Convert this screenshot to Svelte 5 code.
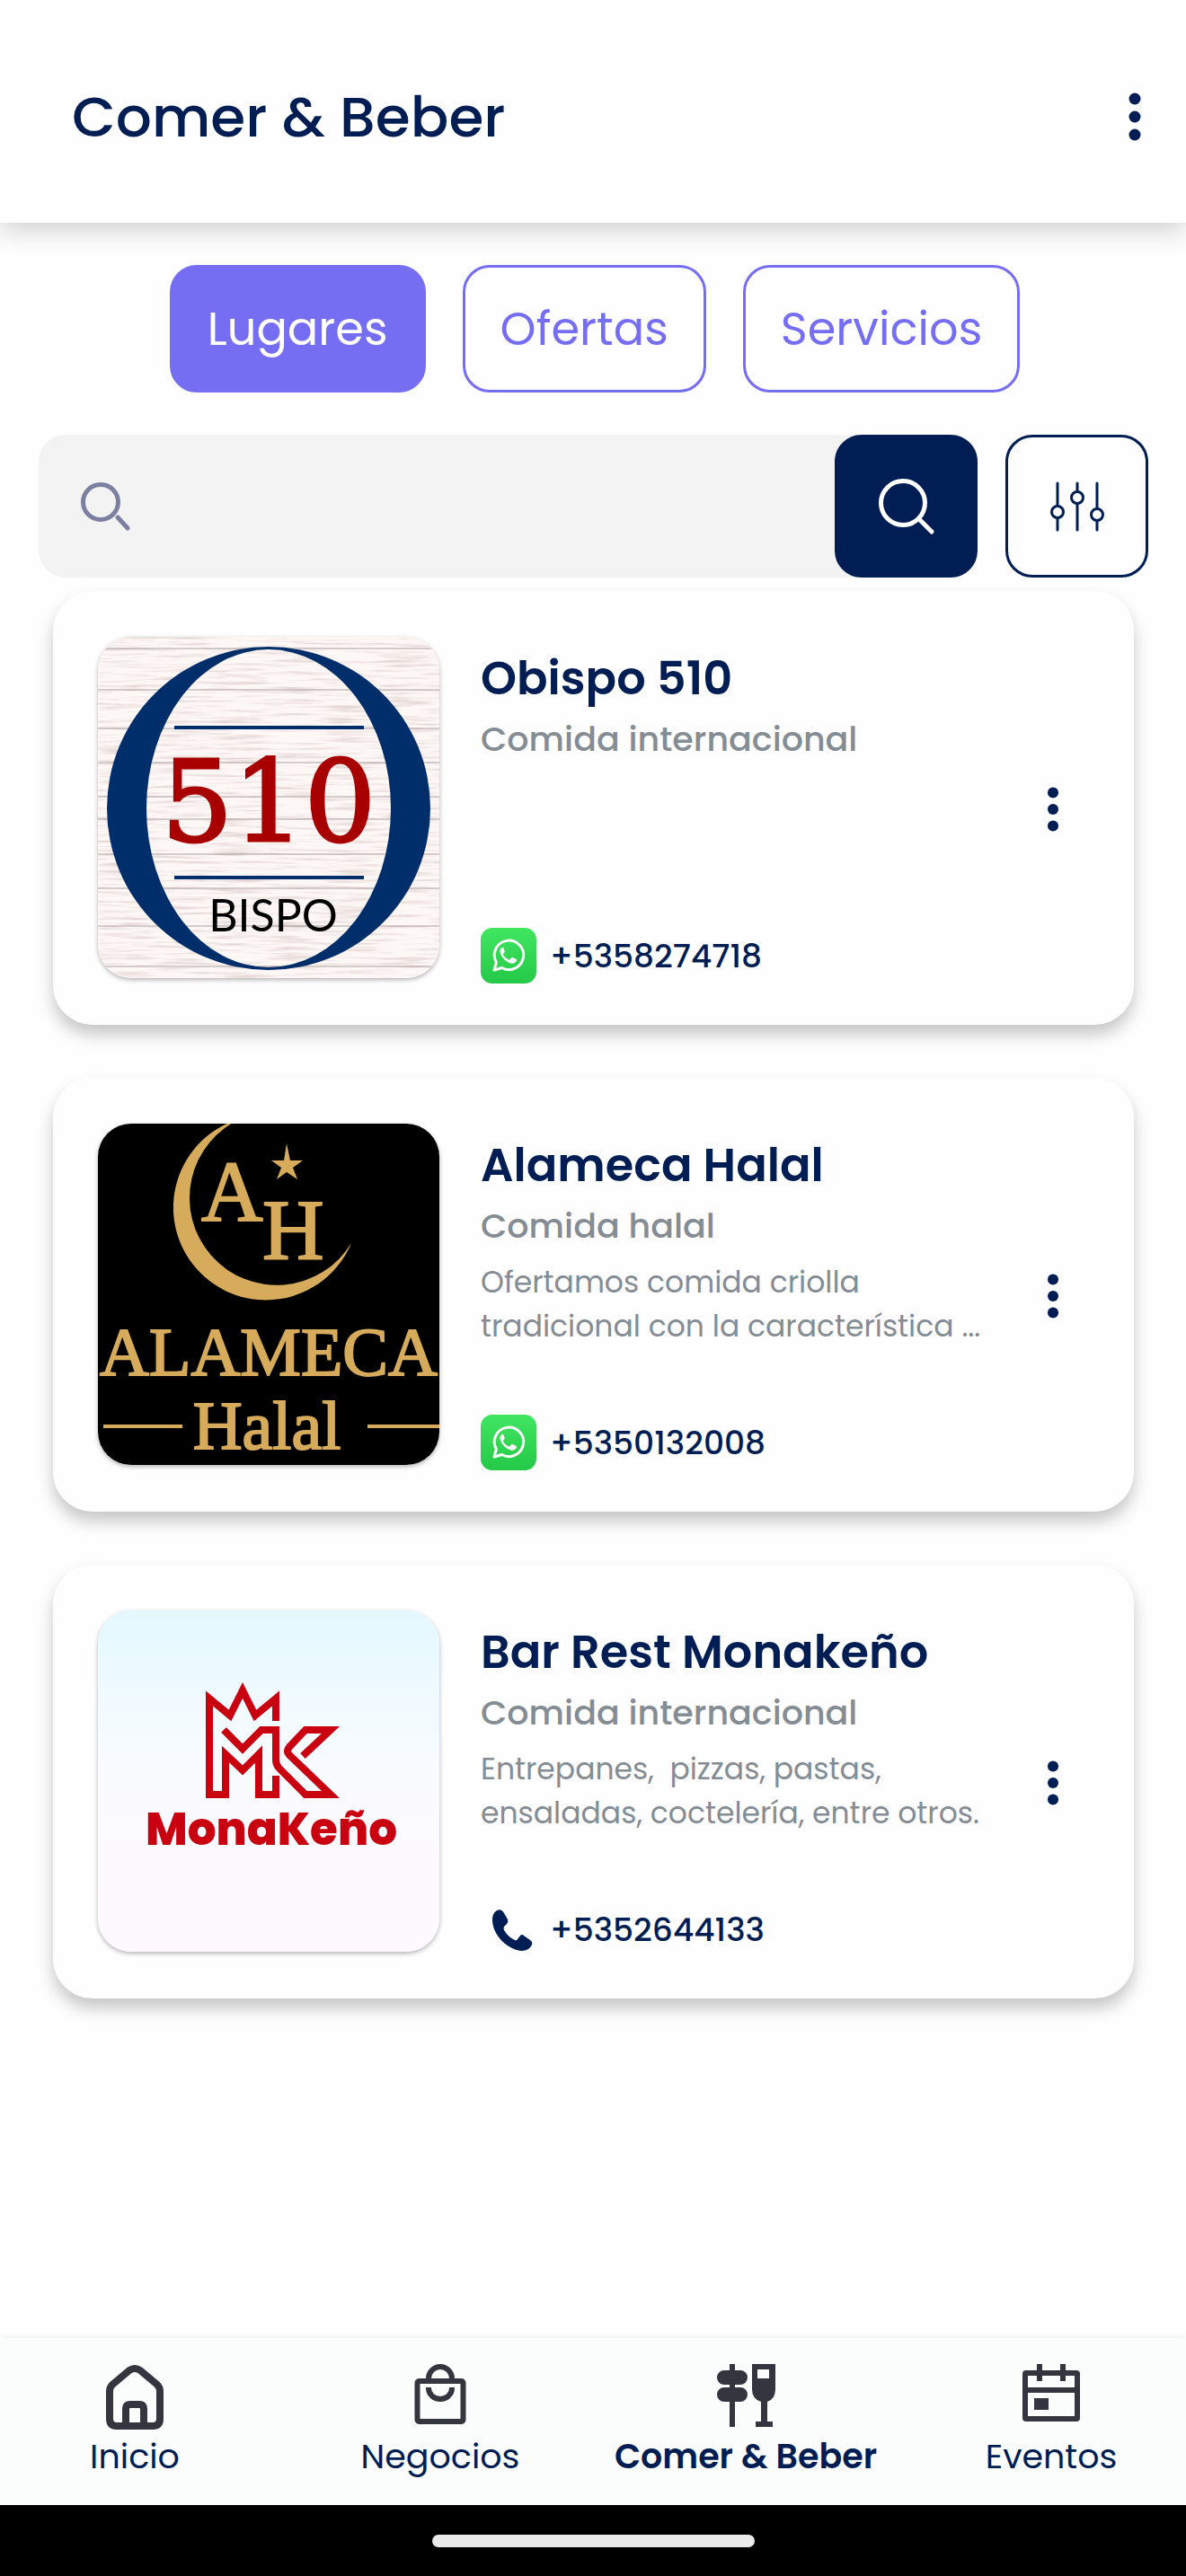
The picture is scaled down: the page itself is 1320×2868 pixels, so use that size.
<script>
  const tabs = ['Lugares', 'Ofertas', 'Servicios'];
  let activeTab = $state('Lugares');
  let query = $state('');

  const places = [
    {
      name: 'Obispo 510',
      category: 'Comida internacional',
      description: '',
      phone: '+5358274718',
      whatsapp: true,
      logo: 'obispo'
    },
    {
      name: 'Alameca Halal',
      category: 'Comida halal',
      description: 'Ofertamos comida criolla tradicional con la característica ...',
      phone: '+5350132008',
      whatsapp: true,
      logo: 'alameca'
    },
    {
      name: 'Bar Rest Monakeño',
      category: 'Comida internacional',
      description: 'Entrepanes,\u00a0 pizzas, pastas, ensaladas, coctelería, entre otros.',
      phone: '+5352644133',
      whatsapp: false,
      logo: 'monakeno'
    }
  ];

  const navItems = [
    { label: 'Inicio', icon: 'home' },
    { label: 'Negocios', icon: 'bag' },
    { label: 'Comer & Beber', icon: 'food' },
    { label: 'Eventos', icon: 'calendar' }
  ];
  let activeNav = $state('Comer & Beber');
</script>

{#snippet dots()}
  <svg class="dots" viewBox="0 0 14 54" aria-hidden="true">
    <circle cx="7" cy="7" r="6.5" />
    <circle cx="7" cy="27" r="6.5" />
    <circle cx="7" cy="47" r="6.5" />
  </svg>
{/snippet}

{#snippet logo(name)}
  {#if name === 'obispo'}
    <svg class="logo" viewBox="0 0 380 380" role="img" aria-label="Obispo 510">
      <filter id="grain" x="0" y="0" width="100%" height="100%">
        <feTurbulence type="fractalNoise" baseFrequency="0.016 0.3" numOctaves="4" seed="8" />
        <feColorMatrix values="0 0 0 0 0.6  0 0 0 0 0.48  0 0 0 0 0.46  1.3 0.5 0 0 -0.86" />
      </filter>
      <rect width="380" height="380" fill="#fdf7f5" />
      <rect width="380" height="380" filter="url(#grain)" />
      <path
        d="M0 13h380M0 59h380M0 102h380M0 140h380M0 178h380M0 203h380M0 242h380M0 280h380M0 322h380M0 367h380"
        stroke="#5d4c4c"
        stroke-opacity="0.5"
      />
      <path
        fill="#002e6a"
        fill-rule="evenodd"
        d="M190 11a180 180 0 1 1 0 360a180 180 0 1 1 0-360zM190 14a136 177 0 1 0 0 354a136 177 0 1 0 0-354z"
      />
      <path d="M85 101h211M85 268h211" stroke="#002e6a" stroke-width="4" />
      <text class="logo-number" x="190" y="227">510</text>
      <text class="logo-bispo" x="195" y="328">BISPO</text>
    </svg>
  {:else if name === 'alameca'}
    <svg class="logo" viewBox="0 0 380 380" role="img" aria-label="Alameca Halal">
      <rect width="380" height="380" />
      <g fill="#d6ab5b">
        <path d="M160-6A103 103 0 1 0 282 133A97 97 0 1 1 160-6z" />
        <path d="M210 22l4 19h14l-11 8 5 13-12-8-11 8 5-13-11-8h14z" />
        <text class="logo-initial" x="115" y="108">A</text>
        <text class="logo-initial" x="183" y="151">H</text>
        <text class="logo-word" x="190" y="280">ALAMECA</text>
        <text class="logo-word" x="188" y="362">Halal</text>
        <path d="M6 335h88v4H6zM300 335h80v4h-80z" />
      </g>
    </svg>
  {:else}
    <svg class="logo" viewBox="0 0 380 380" role="img" aria-label="Monakeño">
      <linearGradient id="sky" x1="0" y1="0" x2="0" y2="1">
        <stop offset="0" stop-color="#e3f9ff" />
        <stop offset="0.3" stop-color="#f3fbff" />
        <stop offset="0.55" stop-color="#fbfbff" />
        <stop offset="1" stop-color="#fef9ff" />
      </linearGradient>
      <rect width="380" height="380" fill="url(#sky)" />
      <g fill="none" stroke="#c9000f" stroke-width="8" stroke-miterlimit="6">
        <path d="M198 123V98L175 117 161 89 147 117 124 98V205H142V160L161 178 179 160V205H198V184" />
        <path d="M140 133L161 154 182 133H198V166Q198 172 202 176L231 205H259L213 161Q209 157 213 152L231 133H259L228 162" />
      </g>
      <text class="logo-monakeno" x="193" y="261">MonaKeño</text>
    </svg>
  {/if}
{/snippet}

{#snippet navIcon(name)}
  <svg class="nav-icon" viewBox="0 0 76 76" aria-hidden="true">
    {#if name === 'home'}
      <g fill="none" stroke="#33353f" stroke-width="8" stroke-linejoin="round">
        <path d="M10 31Q10 27 13 24L32 8Q38 4 44 8L63 24Q66 27 66 31V62Q66 70 58 70H18Q10 70 10 62z" />
        <path d="M28 70V51Q28 46 33 46H43Q48 46 48 51V70" />
      </g>
    {:else if name === 'bag'}
      <g fill="none" stroke="#33353f" stroke-width="6">
        <rect x="12.5" y="20" width="51" height="45" rx="2" />
        <path d="M25 20V17a13 13 0 0 1 26 0V20M25 27v1a13 12 0 0 0 26 0v-1" />
      </g>
    {:else if name === 'food'}
      <g fill="#33353f">
        <path d="M20 1h6v7h6a8 8 0 0 1 0 16h-6v3h6a8 8 0 0 1 0 16h-6v28h-6V43h-6a8 8 0 0 1 0-16h6v-3h-6a8 8 0 0 1 0-16h6z" />
        <path fill-rule="evenodd" d="M45 1h26v28q0 11-9 14v22h6v6H49v-6h6V43q-10-3-10-14zM51 7v10h13V7z" />
      </g>
    {:else}
      <g fill="none" stroke="#33353f" stroke-width="6">
        <rect x="9" y="11" width="58" height="51" rx="1" />
        <path d="M9 30H67M25 1v19M51 1v19" />
      </g>
      <path d="M19 39h16v13H19z" fill="#33353f" />
    {/if}
  </svg>
{/snippet}

<div class="screen">
  <header class="topbar">
    <h1>Comer & Beber</h1>
    <button class="icon-button" aria-label="Más opciones">{@render dots()}</button>
  </header>

  <div class="tabs">
    {#each tabs as tab}
      <button class="tab" class:active={tab === activeTab} onclick={() => (activeTab = tab)}>{tab}</button>
    {/each}
  </div>

  <form class="search" onsubmit={(e) => e.preventDefault()}>
    <div class="search-box">
      <label for="query" aria-label="Buscar">
        <svg class="search-hint" viewBox="0 0 56 56" fill="none" stroke="#7c80a0" stroke-width="5" aria-hidden="true">
          <circle cx="23" cy="23" r="19.5" />
          <path d="M42 40l11 12" stroke-linecap="round" />
        </svg>
      </label>
      <input id="query" type="text" bind:value={query} />
      <button class="search-button" type="submit" aria-label="Buscar">
        <svg viewBox="0 0 64 64" fill="none" stroke="#fff" stroke-width="5" stroke-linecap="round" aria-hidden="true">
          <circle cx="28" cy="28" r="24.5" />
          <path d="M46 46l14 14" />
        </svg>
      </button>
    </div>
    <button class="filter-button" type="button" aria-label="Filtros">
      <svg viewBox="0 0 64 64" fill="none" stroke="#001e53" stroke-width="3" stroke-linecap="round" aria-hidden="true">
        <path d="M10 6V31M10 45V58M32 6V15M32 29V58M54 6V34M54 48V58" />
        <circle cx="10" cy="38" r="6.5" />
        <circle cx="32" cy="22" r="6.5" />
        <circle cx="54" cy="41" r="6.5" />
      </svg>
    </button>
  </form>

  <main class="places">
    {#each places as place}
      <article class="card">
        {@render logo(place.logo)}
        <div class="details">
          <h2>{place.name}</h2>
          <p class="category">{place.category}</p>
          <p class="description">{place.description}</p>
          <a class="phone" href="tel:{place.phone}">
            {#if place.whatsapp}
              <svg viewBox="0 0 62 62" aria-hidden="true">
                <linearGradient id="wa" x1="0" y1="0" x2="0" y2="1">
                  <stop offset="0" stop-color="#40e560" />
                  <stop offset="1" stop-color="#25c948" />
                </linearGradient>
                <rect width="62" height="62" rx="13" fill="url(#wa)" />
                <path
                  d="M15 47l2.4-8.6a16.2 16.2 0 1 1 6.2 6.1z"
                  fill="none"
                  stroke="#fff"
                  stroke-width="3"
                  stroke-linejoin="round"
                />
                <path
                  fill="#fff"
                  d="M25.5 22.5c-.5-1-1.6-1-2.4-.2-1.6 1.6-2 3.6-1.3 5.7 2 5.6 6 9.6 11.7 11.6 2.6.8 5.800-.6 6.400-3 .2-1 .1-1.500-.6-1.900l-3.700-1.800c-.7-.3-1.100-.2-1.500.3l-1.600 2c-.4.500-.8.500-1.400.200-2.600-1.100-4.600-2.900-6-5.300-.3-.5-.2-.9.200-1.300l1.200-1.500c.3-.4.3-.8.100-1.300z"
                />
              </svg>
            {:else}
              <svg viewBox="0 0 62 62" aria-hidden="true">
                <path
                  fill="#001e53"
                  d="M18 10C22 8 24 10 26 13L30 20Q31 23 29 25L26 28Q25 30 26 32Q31 40 38 43Q40 44 41 42L44 38Q46 36 48 38L55 43Q58 45 57 48C54 55 47 56 40 54C25 49 13 35 13 20Q13 13 18 10z"
                />
              </svg>
            {/if}
            {place.phone}
          </a>
        </div>
        <button class="icon-button" aria-label="Opciones de {place.name}">{@render dots()}</button>
      </article>
    {/each}
  </main>

  <nav class="bottom-nav">
    {#each navItems as item}
      <a
        href="#{item.icon}"
        class:current={item.label === activeNav}
        onclick={() => (activeNav = item.label)}
      >
        {@render navIcon(item.icon)}
        {item.label}
      </a>
    {/each}
  </nav>
  <div class="system-bar"><span class="handle"></span></div>
</div>

<style>
  :global(body) {
    margin: 0;
    background: #fefefe;
  }

  .screen {
    display: flex;
    flex-direction: column;
    min-height: 100vh;
    color: #001e53;
    font-family: Poppins, Inter, 'Liberation Sans', sans-serif;
  }

  button {
    padding: 0;
    border: none;
    background: none;
    color: inherit;
    font: inherit;
    cursor: pointer;
  }

  h1,
  h2,
  p {
    margin: 0;
  }

  .topbar {
    display: flex;
    align-items: center;
    justify-content: space-between;
    padding: 73px 17px 61px 80px;
    background: #fefefe;
    box-shadow: 0 8px 28px rgba(0, 0, 0, 0.19);
  }

  h1 {
    font-size: 63px;
    font-weight: 500;
    line-height: 114px;
  }

  .icon-button {
    display: flex;
    flex: none;
    align-items: center;
    justify-content: center;
    width: 80px;
    height: 80px;
  }

  .dots {
    width: 14px;
    height: 54px;
    fill: #001e53;
  }

  .card .dots {
    height: 50px;
  }

  .tabs {
    display: flex;
    justify-content: center;
    gap: 41px;
    padding: 47px 40px 47px 44px;
  }

  .tab {
    box-sizing: border-box;
    height: 142px;
    padding: 0 39px;
    border: 3px solid #756ef3;
    border-radius: 30px;
    color: #756ef3;
    font-size: 51px;
  }

  .tab.active {
    background: #756ef3;
    color: #fff;
  }

  .search {
    display: flex;
    gap: 31px;
    padding: 0 42px 0 43px;
  }

  .search-box {
    display: flex;
    flex: 1;
    align-items: center;
    min-width: 0;
    border-radius: 30px;
    background: #f3f3f3;
  }

  .search-box label {
    display: flex;
    padding-left: 46px;
  }

  .search-hint {
    width: 56px;
    height: 56px;
  }

  .search-box input {
    flex: 1;
    min-width: 0;
    padding: 0 24px;
    border: none;
    outline: none;
    background: none;
    color: inherit;
    font: inherit;
    font-size: 40px;
  }

  .search-button,
  .filter-button {
    display: flex;
    box-sizing: border-box;
    flex: none;
    align-items: center;
    justify-content: center;
    width: 159px;
    height: 159px;
    border: 3px solid #001e53;
    border-radius: 30px;
  }

  .search-button {
    background: #001e53;
  }

  .search-button svg,
  .filter-button svg {
    width: 64px;
    height: 64px;
  }

  .places {
    display: flex;
    flex: 1;
    flex-direction: column;
    gap: 59px;
    padding: 15px 58px 60px 59px;
  }

  .card {
    display: flex;
    align-items: center;
    padding: 48px 50px 46px;
    border-radius: 44px;
    background: #fefefe;
    box-shadow: 0 11px 18px rgba(0, 0, 0, 0.22);
  }

  .logo {
    flex: none;
    align-self: flex-start;
    width: 380px;
    height: 380px;
    margin: 3px 46px 0 0;
    border-radius: 37px;
    box-shadow: 0 2px 5px rgba(0, 0, 0, 0.3);
  }

  .logo-number {
    fill: #a80000;
    stroke: #a80000;
    stroke-width: 3;
    font-family: 'DejaVu Serif', serif;
    font-size: 125px;
    text-anchor: middle;
  }

  .logo-bispo {
    fill: #000;
    font-family: Lato, sans-serif;
    font-size: 50px;
    text-anchor: middle;
  }

  .logo-initial,
  .logo-word {
    stroke: #d6ab5b;
    stroke-width: 2;
    font-family: 'Liberation Serif', serif;
  }

  .logo-initial {
    font-size: 95px;
  }

  .logo-word {
    font-size: 76px;
    text-anchor: middle;
  }

  .logo-monakeno {
    fill: #c9000f;
    font-size: 50px;
    font-weight: 800;
    text-anchor: middle;
  }

  .details {
    display: flex;
    flex: 1;
    flex-direction: column;
    min-width: 0;
    min-height: 372px;
    padding-top: 17px;
    margin-right: 30px;
  }

  h2 {
    font-size: 51px;
    font-weight: 600;
    line-height: 64px;
  }

  .category {
    margin-top: 12px;
    color: #848c94;
    font-size: 38px;
    font-weight: 500;
    line-height: 48px;
  }

  .description {
    margin-top: 14px;
    color: #848c94;
    font-size: 33px;
    line-height: 49px;
  }

  .phone {
    display: flex;
    align-items: center;
    gap: 15px;
    margin-top: auto;
    color: inherit;
    font-size: 36px;
    font-weight: 500;
    text-decoration: none;
  }

  .phone svg {
    width: 62px;
    height: 62px;
  }

  .bottom-nav {
    display: grid;
    grid-template-columns: repeat(4, 1fr);
    gap: 40px;
    padding: 28px 0 26px;
    background: #fbfdfd;
    box-shadow: 0 0 8px rgba(0, 0, 0, 0.08);
  }

  .bottom-nav a {
    display: flex;
    flex-direction: column;
    align-items: center;
    color: inherit;
    font-size: 38px;
    line-height: 56px;
    white-space: nowrap;
    text-decoration: none;
  }

  .bottom-nav a.current {
    font-weight: 600;
  }

  .nav-icon {
    width: 76px;
    height: 76px;
  }

  .system-bar {
    display: flex;
    align-items: center;
    justify-content: center;
    height: 79px;
    background: #000;
  }

  .handle {
    width: 359px;
    height: 14px;
    border-radius: 7px;
    background: #ebebeb;
  }
</style>
